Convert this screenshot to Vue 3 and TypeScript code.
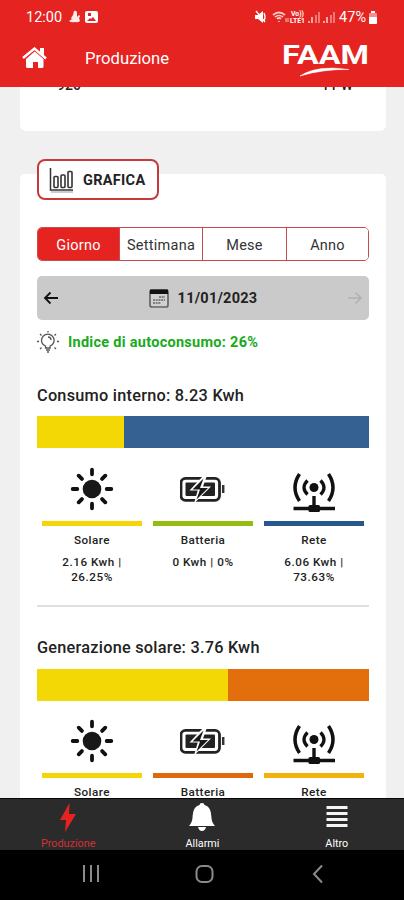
<script setup lang="ts">
interface Source { label: string; icon: 'sun' | 'battery' | 'grid'; color: string; value: string; percent: string }
interface Section { title: string; share: number; rest: string; sources: Source[] }

const tabs: string[] = ['Giorno', 'Settimana', 'Mese', 'Anno']
const sections: Section[] = [
  {
    title: 'Consumo interno: 8.23 Kwh', share: 26.25, rest: '#356192',
    sources: [
      { label: 'Solare', icon: 'sun', color: '#f3d508', value: '2.16 Kwh |', percent: '26.25%' },
      { label: 'Batteria', icon: 'battery', color: '#95bd10', value: '0 Kwh | 0%', percent: '' },
      { label: 'Rete', icon: 'grid', color: '#28578f', value: '6.06 Kwh |', percent: '73.63%' },
    ],
  },
  {
    title: 'Generazione solare: 3.76 Kwh', share: 57.5, rest: '#e36f0c',
    sources: [
      { label: 'Solare', icon: 'sun', color: '#f3d508', value: '', percent: '' },
      { label: 'Batteria', icon: 'battery', color: '#df670d', value: '', percent: '' },
      { label: 'Rete', icon: 'grid', color: '#f2b20c', value: '', percent: '' },
    ],
  },
]
</script>

<template>
  <div class="screen">
    <header class="header">
      <div class="status">
        <span class="clock">12:00</span>
        <svg class="notices" width="31" height="16" viewBox="0 0 31 16" fill="#fff">
          <path d="M6 2q3-1 3 2v4l2-2q2 1 0 3l1 3q-2 2-5 1-4 1-6-1l3-2-1-1 2-3z" opacity=".9" />
          <path fill-rule="evenodd" d="M19 2h9q2 0 2 2v8q0 2-2 2h-9q-2 0-2-2V4q0-2 2-2zm0 10h9l-3-4-2 2-1-1zM20 4v3h3V4z" />
        </svg>
        <span class="grow"></span>
        <svg class="signals" width="82" height="16" viewBox="0 0 82 16" fill="none" stroke="#fff">
          <path d="M1 6h3l5-4v12l-5-4H1z" fill="#fff" stroke="none" /><path d="M2 2l9 11M10 4q2 4 0 8" stroke-width="1.3" />
          <g opacity=".75"><path d="M19 6q6-5 12 0M21 8q4-3 8 0M23 10q2-2 4 0M25 12v1" stroke-width="1.7" /><path d="M32 13V9m2 0v4" /></g>
          <g fill="#fff" stroke="none" class="network"><text x="37" y="7" textLength="13" lengthAdjust="spacingAndGlyphs">Vo))</text><text x="36" y="14" textLength="15" lengthAdjust="spacingAndGlyphs">LTE1</text></g>
          <g opacity=".6" stroke-width="2"><path d="M55 14v-2m3 2V9m4 5V6m3 8V3M70 14v-2m3 2V9m4 5V6m3 8V3" stroke-opacity=".65" /><path d="M55 14v-2m3 2V8M70 14v-2m3 2V8" /></g>
        </svg>
        <span class="charge">47%</span>
        <svg width="10" height="15" viewBox="0 0 10 15"><rect x="1" y="3" width="8" height="11" rx="1" fill="#fff" opacity=".5" /><path d="M3 1h4v2H3zM1 7h8v6q0 1-1 1H2q-1 0-1-1z" fill="#fff" /></svg>
      </div>
      <div class="toolbar">
        <svg class="home" width="26" height="22" viewBox="0 0 26 22"><path d="M1 11 12.500 1.500 24 11.500" fill="none" stroke="#fff" stroke-width="2.400" /><path d="M18 1h4v8l-4-4zM4 12l8.700-7.500L21.500 12v7.500q0 1.500-1.500 1.500h-4v-6h-5v6H5.500Q4 21 4 19.500z" fill="#fff" /></svg>
        <h1>Produzione</h1>
        <svg class="logo" width="90" height="38" viewBox="0 0 90 38">
          <text x="1" y="22" textLength="87" lengthAdjust="spacingAndGlyphs">FAAM</text>
          <path d="M19 34Q36 22.500 68 27.500Q42 27 19 34" fill="#fff" stroke="#fff" stroke-width=".5" />
        </svg>
      </div>
    </header>

    <main class="content">
      <section class="summary"><span>920</span><span>11 W</span></section>
      <section class="panel">
        <div class="badge">
          <svg width="25" height="26" viewBox="0 0 25 26" fill="none" stroke="#333"><path d="M1.500 1v22H24" stroke-width="1.500" /><path d="M2 25h22" stroke="#bbb" stroke-width="1.500" /><rect x="5" y="9.500" width="4" height="11" rx="1" stroke-width="1.600" /><rect x="12" y="8" width="4" height="12.500" rx="1" stroke-width="1.600" /><rect x="19" y="4.500" width="4" height="16" rx="1" stroke-width="1.600" /></svg>
          <span>GRAFICA</span>
        </div>
        <div class="tabs">
          <button v-for="(tab, i) in tabs" :key="tab" :class="{ active: i === 0 }">{{ tab }}</button>
        </div>
        <div class="date">
          <svg width="16" height="16" viewBox="0 0 16 16" fill="none" stroke="#111" stroke-width="1.800"><path d="M15 8H2m5.500-5.500L2 8l5.500 5.500" /></svg>
          <div class="day">
            <svg width="20" height="20" viewBox="0 0 20 20" fill="none"><rect x="1" y="2" width="18" height="17" rx="2" fill="#d0d0d0" stroke="#666" stroke-width="1.700" /><path d="M1 1.500h18V6H1z" fill="#111" /><path d="M10 9h6M4 12h12M4 15h8" stroke="#666" stroke-width="1.700" stroke-dasharray="2 .7" /></svg>
            <span>11/01/2023</span>
          </div>
          <svg width="16" height="16" viewBox="0 0 16 16" fill="none" stroke="#b1b1b1" stroke-width="1.500"><path d="M1 8h13M8.500 2.500 14 8l-5.500 5.500" /></svg>
        </div>
        <div class="index">
          <svg width="22" height="22" viewBox="0 0 22 22" fill="none" stroke="#555" stroke-width="1.300"><path d="M8.500 17v-2q-4-2-4-5.500a6.300 6.300 0 0 1 12.600 0q0 3.500-4 5.500v2zM9 19h4M10 21h2M11 6q3 0 3 3" /><path d="M11 0v1.500M3 3l1.500 1.500M19 3l-1.500 1.500M0 10.500h2M20 10.500h2M3 18l1.500-1.500M19 18l-1.500-1.500" /></svg>
          <span>Indice di autoconsumo: 26%</span>
        </div>

        <article v-for="section in sections" :key="section.title" class="energy">
          <h2>{{ section.title }}</h2>
          <div class="bar" :style="{ background: section.rest }"><div class="share" :style="{ width: section.share + '%' }"></div></div>
          <div class="sources">
            <div v-for="source in section.sources" :key="source.label" class="source">
              <svg v-if="source.icon === 'sun'" class="icon" viewBox="0 0 46 46">
                <circle cx="23" cy="23" r="9.300" fill="#181818" />
                <path d="M23 3.700v4.600M23 37.700v4.600M3.700 23h4.600M37.700 23h4.600M9.700 9.700l3.200 3.200M33.100 33.100l3.200 3.200M9.700 36.300l3.200-3.200M33.100 12.900l3.200-3.200" fill="none" stroke="#111" stroke-width="3.800" stroke-linecap="round" />
              </svg>
              <svg v-else-if="source.icon === 'battery'" class="icon" viewBox="0 0 46 46">
                <rect x="1" y="12.300" width="38.500" height="22" rx="4.500" fill="none" stroke="#222" stroke-width="2.800" />
                <rect x="5.500" y="16.500" width="29.500" height="13.500" rx="1" fill="#222" />
                <path d="M43.200 19v8" stroke="#333" stroke-width="2.500" />
                <path d="M24 9 9.500 24.500h8.200L14 37.500l17-17h-8l4-11z" fill="#fff" />
                <path d="M23.500 12.500 12.500 23.500h7.500l-3.500 10L28 22h-8z" fill="#181818" />
              </svg>
              <svg v-else class="icon" viewBox="0 0 46 46">
                <circle cx="23" cy="21.500" r="4.500" fill="#111" />
                <path d="M16.500 14.500q-7 7 0 14M29.500 14.500q7 7 0 14" fill="none" stroke="#111" stroke-width="3.300" />
                <path d="M8.500 8q-9 13.500 0 27M37.500 8q9 13.500 0 27" fill="none" stroke="#111" stroke-width="3.500" />
                <path d="M23 30v12M2.500 42.500h41.500" stroke="#111" stroke-width="3.400" /><rect x="17.500" y="39" width="11.500" height="7" rx="1.500" fill="#111" />
              </svg>
              <div class="line" :style="{ background: source.color }"></div>
              <strong>{{ source.label }}</strong>
              <p v-if="source.value">{{ source.value }}<br v-if="source.percent">{{ source.percent }}</p>
            </div>
          </div>
        </article>
      </section>
    </main>

    <nav class="nav">
      <a class="selected"><svg width="18" height="29" viewBox="0 0 18 29"><path d="M10.500 0 1 17h6L6 29l11-18h-7z" fill="#e52320" /></svg><span>Produzione</span></a>
      <a><svg width="28" height="29" viewBox="0 0 28 29"><path d="M14 0q2.500 0 2.500 2c5 1.500 6.500 5 7 13 .3 4 1.500 5.500 3.500 8H1c2-2.500 3-4 3.500-8 .5-8 2-11.500 7-13q0-2 2.500-2zM10 24h8q-1 4-4 4t-4-4z" fill="#fff" /></svg><span>Allarmi</span></a>
      <a><svg width="24" height="29" viewBox="0 0 24 29"><path d="M1.500 4.500h21M1.500 10.500h21M1.500 16.500h21M1.500 22.500h21" stroke="#f4f4f4" stroke-width="2.800" /></svg><span>Altro</span></a>
    </nav>
    <footer class="system">
      <svg width="20" height="20" viewBox="0 0 20 20"><path d="M3 1v17M10 1v17M17 1v17" stroke="#8b8b8b" stroke-width="2" /></svg>
      <svg width="20" height="20" viewBox="0 0 20 20"><rect x="1.500" y="2" width="16" height="16" rx="5.500" fill="none" stroke="#8b8b8b" stroke-width="2" /></svg>
      <svg width="20" height="20" viewBox="0 0 20 20"><path d="M13 1.500 5 10l8 8.500" fill="none" stroke="#8b8b8b" stroke-width="2" /></svg>
    </footer>
  </div>
</template>

<style>
body { margin: 0; }
</style>
<style scoped>
* { box-sizing: border-box; }
.screen { width: 404px; height: 900px; display: flex; flex-direction: column; overflow: hidden; background: #f0f0f0; color: #222; font-family: Roboto, "Liberation Sans", sans-serif; }
svg { display: block; flex: none; }
.header { height: 87px; flex: none; background: #e52320; color: #fff; }
.status { height: 34px; display: flex; align-items: center; padding: 0 26px; font-size: 14.500px; }
.notices { margin-left: 6px; }
.grow { flex: 1; }
.network { font-size: 6.500px; font-weight: 700; }
.charge { margin: 0 2px 0 3px; }
.toolbar { height: 48px; display: flex; align-items: center; padding: 0 33px 0 22px; }
h1 { margin: 1px 0 0 37px; flex: 1; font-weight: 400; font-size: 16.700px; line-height: 24px; }
.logo { margin-top: 6px; overflow: visible; }
.logo text { fill: #fff; font-size: 26px; font-weight: 700; }
.content { height: 711px; flex: none; padding: 0 18px 0 20px; overflow: hidden; }
.summary { height: 44px; padding: 0 33px 0 37px; background: #fff; border-radius: 0 0 6px 6px; display: flex; justify-content: space-between; font-size: 14px; line-height: 16px; font-weight: 500; }
.summary span { margin-top: -10px; }
.panel { margin-top: 43px; height: 900px; padding: 0 17px; background: #fff; border-radius: 5px; display: flow-root; }
.badge { margin-top: -15px; width: 122px; height: 41px; border: 2px solid #c8393b; border-radius: 8px; background: #fff; display: flex; align-items: center; padding-left: 10px; gap: 9px; font-size: 14.500px; font-weight: 700; letter-spacing: .3px; }
.badge span { margin-top: 2px; }
.tabs { margin-top: 27px; height: 34px; width: 332px; display: grid; grid-template-columns: 81px 83px 84px 1fr; border: 1px solid #c84b4d; border-radius: 5px; overflow: hidden; }
.tabs button { padding: 2px 0 0; border: 0; border-left: 1px solid #c84b4d; background: #fff; color: #333; font: 400 14.500px Roboto, sans-serif; letter-spacing: .25px; }
.tabs .active { border-left: 0; background: #e52320; color: #fff; }
.date { margin-top: 15px; width: 332px; height: 44px; border-radius: 5px; background: #cacaca; display: flex; justify-content: space-between; align-items: center; padding: 0 6px; }
.day { display: flex; align-items: center; gap: 9px; font-size: 14.500px; font-weight: 700; letter-spacing: .25px; }
.index { height: 22px; margin-top: 11px; display: flex; align-items: center; gap: 9px; color: #19aa1c; font-size: 14.500px; font-weight: 700; letter-spacing: .28px; }
.energy { width: 332px; height: 252px; }
.energy:first-of-type { margin-top: 33px; border-bottom: 2px solid #dfdfdf; height: 221px; }
.energy + .energy { margin-top: 31px; }
.energy + .energy h2 { height: 31px; }
h2 { margin: 0; height: 30px; font-size: 16.300px; line-height: 20px; font-weight: 500; letter-spacing: .25px; white-space: nowrap; }
.bar { height: 32px; }
.share { height: 100%; background: #f3d806; }
.sources { display: flex; gap: 11px; padding: 18px 5px 0; }
.energy + .energy .sources { padding-top: 17px; }
.source { flex: 1; display: flex; flex-direction: column; align-items: center; }
.icon { width: 46px; height: 46px; }
.line { width: 100%; height: 5px; margin-top: 9px; }
strong { margin-top: 6px; font-size: 11.700px; line-height: 16px; font-weight: 500; letter-spacing: .45px; }
p { margin: 7px 0 0; text-align: center; font-size: 11.700px; line-height: 15px; font-weight: 500; letter-spacing: .55px; white-space: nowrap; }
.nav { height: 52px; flex: none; display: grid; grid-template-columns: repeat(3, 1fr); padding-left: 1px; background: #2b2b2b; color: #fff; border-top: 1px solid #080808; }
.nav a { display: flex; flex-direction: column; align-items: center; padding-top: 4px; font-size: 10.800px; line-height: 16px; }
.nav span { margin-top: 4px; }
.nav .selected { color: #d33032; }
.system { height: 50px; flex: none; display: flex; justify-content: space-between; align-items: center; padding: 0 75px 2px 81px; background: #000; }
</style>
